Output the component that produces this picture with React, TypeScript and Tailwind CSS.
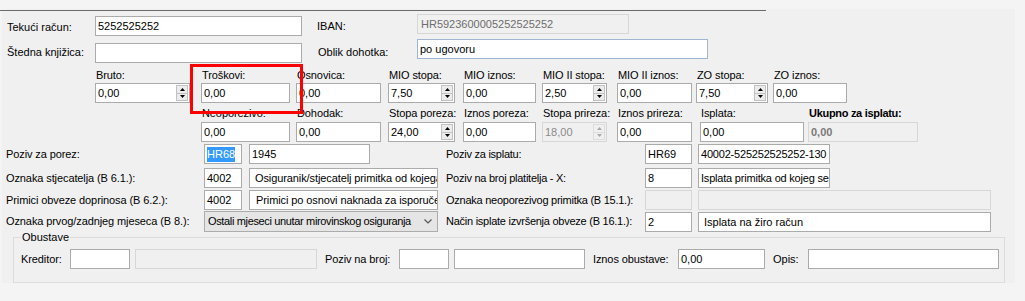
import React from "react";

type BoxProps = {
  w: string;
  children?: React.ReactNode;
  disabled?: boolean;
  className?: string;
  pad?: string;
};

function TBox({ w, children, disabled, className = "", pad = "pl-[2px]" }: BoxProps) {
  return (
    <div
      className={`${w} h-[20px] shrink-0 border flex items-center overflow-hidden whitespace-nowrap leading-[14px] ${pad} ${
        disabled ? "border-[#d7d7d7] bg-[#f0f0f0] text-[#6d6d6d]" : "border-[#ababab] bg-white text-black"
      } ${className}`}
    >
      {children}
    </div>
  );
}

function Arrow({ up, color }: { up?: boolean; color: string }) {
  return (
    <svg width="5" height="3" viewBox="0 0 5 3">
      <path d={up ? "M0 3h5L2.5 0z" : "M0 0h5L2.5 3z"} fill={color} />
    </svg>
  );
}

function Spin({ w, value, disabled }: { w: string; value: string; disabled?: boolean }) {
  const c = disabled ? "#a8a8a8" : "#000000";
  return (
    <div
      className={`${w} h-[20px] shrink-0 border flex overflow-hidden whitespace-nowrap leading-[14px] ${
        disabled ? "border-[#d7d7d7] bg-[#f0f0f0] text-[#8a8a8a]" : "border-[#ababab] bg-white text-black"
      }`}
    >
      <div className="flex-1 flex items-center pl-[2px]">{value}</div>
      <div className="w-[12px] flex flex-col my-[1px] mr-[1px]">
        <div
          className={`flex-1 border flex items-center justify-center ${
            disabled ? "border-[#dcdcdc] bg-[#f0f0f0]" : "border-[#c2c2c2] bg-[#ececec]"
          }`}
        >
          <Arrow up color={c} />
        </div>
        <div
          className={`flex-1 border border-t-0 flex items-center justify-center ${
            disabled ? "border-[#dcdcdc] bg-[#f0f0f0]" : "border-[#c2c2c2] bg-[#ececec]"
          }`}
        >
          <Arrow color={c} />
        </div>
      </div>
    </div>
  );
}

function Cell({
  cw,
  label,
  children,
  bold,
  gap,
}: {
  cw: string;
  label: string;
  children: React.ReactNode;
  bold?: boolean;
  gap: string;
}) {
  return (
    <div className={`${cw} shrink-0 flex flex-col`}>
      <div
        className={`h-[14px] leading-[14px] pl-[1px] whitespace-nowrap ${
          bold ? "font-bold tracking-[-0.3px]" : "tracking-[-0.1px]"
        }`}
      >
        {label}
      </div>
      <div className={gap}>{children}</div>
    </div>
  );
}

export default function App() {
  return (
    <div className="relative w-[1025px] h-[301px] overflow-hidden bg-[#f4f4f4] pt-[9px] pl-[2px] font-['Liberation_Sans',Arial,sans-serif] text-[11px] text-black">
      <div className="w-[1013px] h-[274px] bg-[#f0f0f0] flex flex-col">
        <div className="mt-[1px] -ml-[2px] h-[1px] w-[766px] bg-[#6b6b6b] shrink-0" />

        {/* Row 1 */}
        <div className="mt-[3px] h-[22px] flex items-start shrink-0">
          <div className="ml-[5px] w-[88px] mt-[6px] leading-[14px] whitespace-nowrap">Tekući račun:</div>
          <TBox w="w-[207px]" className="mt-[2px]">5252525252</TBox>
          <div className="ml-[15px] w-[100px] mt-[5px] leading-[14px]">IBAN:</div>
          <TBox w="w-[212px]" disabled pad="pl-[3px]">HR5923600005252525252</TBox>
        </div>

        {/* Row 2 */}
        <div className="mt-[3px] h-[24px] flex items-start shrink-0">
          <div className="ml-[5px] w-[88px] mt-[6px] leading-[14px] whitespace-nowrap">Štedna knjižica:</div>
          <TBox w="w-[207px]" className="mt-[4px]" />
          <div className="ml-[16px] w-[99px] mt-[6px] leading-[14px] whitespace-nowrap">Oblik dohotka:</div>
          <TBox w="w-[291px]" className="!border-[#9fb5d2]">po ugovoru</TBox>
        </div>

        {/* Row 3 */}
        <div className="mt-[5px] flex items-start shrink-0 ml-[93px]">
          <Cell cw="w-[106px]" label="Bruto:" gap="mt-[1px]">
            <Spin w="w-[95px]" value="0,00" />
          </Cell>
          <Cell cw="w-[95px]" label="Troškovi:" gap="mt-[1px]">
            <TBox w="w-[89px]">0,00</TBox>
          </Cell>
          <Cell cw="w-[92px]" label="Osnovica:" gap="mt-[1px]">
            <TBox w="w-[85px]">0,00</TBox>
          </Cell>
          <Cell cw="w-[75px]" label="MIO stopa:" gap="mt-[1px]">
            <Spin w="w-[67px]" value="7,50" />
          </Cell>
          <Cell cw="w-[79px]" label="MIO iznos:" gap="mt-[1px]">
            <TBox w="w-[73px]">0,00</TBox>
          </Cell>
          <Cell cw="w-[75px]" label="MIO II stopa:" gap="mt-[1px]">
            <Spin w="w-[65px]" value="2,50" />
          </Cell>
          <Cell cw="w-[79px]" label="MIO II iznos:" gap="mt-[1px]">
            <TBox w="w-[75px]">0,00</TBox>
          </Cell>
          <Cell cw="w-[77px]" label="ZO stopa:" gap="mt-[1px]">
            <Spin w="w-[72px]" value="7,50" />
          </Cell>
          <Cell cw="w-[74px]" label="ZO iznos:" gap="mt-[1px]">
            <TBox w="w-[74px]">0,00</TBox>
          </Cell>
        </div>

        {/* Row 4 */}
        <div className="mt-[3px] flex items-start shrink-0 ml-[199px]">
          <Cell cw="w-[95px]" label="Neoporezivo:" gap="mt-[2px]">
            <TBox w="w-[89px]">0,00</TBox>
          </Cell>
          <Cell cw="w-[92px]" label="Dohodak:" gap="mt-[2px]">
            <TBox w="w-[85px]">0,00</TBox>
          </Cell>
          <Cell cw="w-[75px]" label="Stopa poreza:" gap="mt-[2px]">
            <Spin w="w-[67px]" value="24,00" />
          </Cell>
          <Cell cw="w-[79px]" label="Iznos poreza:" gap="mt-[2px]">
            <TBox w="w-[73px]">0,00</TBox>
          </Cell>
          <Cell cw="w-[75px]" label="Stopa prireza:" gap="mt-[2px]">
            <Spin w="w-[65px]" value="18,00" disabled />
          </Cell>
          <Cell cw="w-[83px]" label="Iznos prireza:" gap="mt-[2px]">
            <TBox w="w-[75px]">0,00</TBox>
          </Cell>
          <Cell cw="w-[108px]" label="Isplata:" gap="mt-[2px]">
            <TBox w="w-[104px]">0,00</TBox>
          </Cell>
          <Cell cw="w-[110px]" label="Ukupno za isplatu:" bold gap="mt-[2px]">
            <TBox w="w-[110px]" disabled className="font-bold !text-[#7a7a7a]">
              0,00
            </TBox>
          </Cell>
        </div>

        {/* Lower row A */}
        <div className="mt-[2px] h-[20px] flex items-center shrink-0">
          <div className="w-[444px] shrink-0 flex items-center">
            <div className="ml-[4px] w-[198px] whitespace-nowrap tracking-[-0.1px]">Poziv za porez:</div>
            <TBox w="w-[38px]">
              <span className="bg-[#3399ff] text-white leading-[15px]">HR68</span>
            </TBox>
            <TBox w="w-[121px]" className="ml-[7px]">
              1945
            </TBox>
          </div>
          <div className="w-[199px] shrink-0 whitespace-nowrap tracking-[-0.25px]">Poziv za isplatu:</div>
          <TBox w="w-[47px]">HR69</TBox>
          <TBox w="w-[132px]" className="ml-[6px] tracking-[-0.2px]">
            40002-525252525252-130
          </TBox>
        </div>

        {/* Lower row B */}
        <div className="mt-[4px] h-[20px] flex items-center shrink-0">
          <div className="w-[444px] shrink-0 flex items-center">
            <div className="ml-[4px] w-[198px] whitespace-nowrap tracking-[-0.1px]">Oznaka stjecatelja (B 6.1.):</div>
            <TBox w="w-[38px]">4002</TBox>
            <TBox w="w-[189px]" className="ml-[7px] tracking-[-0.1px]" pad="pl-[5px]">
              Osiguranik/stjecatelj primitka od kojega se
            </TBox>
          </div>
          <div className="w-[199px] shrink-0 whitespace-nowrap tracking-[-0.25px]">Poziv na broj platitelja - X:</div>
          <TBox w="w-[47px]">8</TBox>
          <TBox w="w-[132px]" className="ml-[6px] tracking-[-0.2px]">
            Isplata primitka od kojeg se
          </TBox>
        </div>

        {/* Lower row C */}
        <div className="mt-[2px] h-[20px] flex items-center shrink-0">
          <div className="w-[444px] shrink-0 flex items-center">
            <div className="ml-[4px] w-[198px] whitespace-nowrap tracking-[-0.1px]">Primici obveze doprinosa (B 6.2.):</div>
            <TBox w="w-[38px]">4002</TBox>
            <TBox w="w-[189px]" className="ml-[7px] tracking-[-0.1px]" pad="pl-[6px]">
              Primici po osnovi naknada za isporučeni
            </TBox>
          </div>
          <div className="w-[199px] shrink-0 whitespace-nowrap tracking-[-0.25px]">Oznaka neoporezivog primitka (B 15.1.):</div>
          <TBox w="w-[47px]" disabled />
          <TBox w="w-[293px]" className="ml-[6px]" disabled />
        </div>

        {/* Lower row D */}
        <div className="mt-[1px] h-[21px] flex items-center shrink-0">
          <div className="w-[444px] shrink-0 flex items-center">
            <div className="ml-[4px] w-[198px] whitespace-nowrap tracking-[-0.1px]">Oznaka prvog/zadnjeg mjeseca (B 8.):</div>
            <div className="w-[234px] h-[21px] border border-[#acacac] bg-[#e5e5e5] flex items-center pl-[3px] pr-[5px] whitespace-nowrap">
              <span className="flex-1 tracking-[-0.35px]">Ostali mjeseci unutar mirovinskog osiguranja</span>
              <svg width="8" height="5" viewBox="0 0 8 5">
                <path d="M0.5 0.5L4 4L7.5 0.5" stroke="#555555" strokeWidth="1.2" fill="none" />
              </svg>
            </div>
          </div>
          <div className="w-[199px] shrink-0 whitespace-nowrap tracking-[-0.25px]">Način isplate izvršenja obveze (B 16.1.):</div>
          <TBox w="w-[47px]">2</TBox>
          <TBox w="w-[293px]" className="ml-[6px]" pad="pl-[5px]">
            Isplata na žiro račun
          </TBox>
        </div>

        {/* Obustave group */}
        <div className="relative mt-[5px] ml-[11px] w-[992px] h-[46px] border border-[#dcdcdc] shrink-0">
          <span className="absolute left-[7px] top-[-8px] leading-[14px] bg-[#f0f0f0] px-[1px]">Obustave</span>
          <div className="mt-[11px] pl-[7px] h-[20px] flex items-center">
            <div className="w-[49px] shrink-0 tracking-[-0.1px]">Kreditor:</div>
            <TBox w="w-[60px]" />
            <TBox w="w-[182px]" className="ml-[5px]" disabled />
            <div className="ml-[8px] w-[74px] shrink-0 whitespace-nowrap tracking-[-0.1px]">Poziv na broj:</div>
            <TBox w="w-[50px]" />
            <TBox w="w-[131px]" className="ml-[5px]" />
            <div className="ml-[8px] w-[85px] shrink-0 whitespace-nowrap tracking-[-0.1px]">Iznos obustave:</div>
            <TBox w="w-[87px]">0,00</TBox>
            <div className="ml-[8px] w-[35px] shrink-0">Opis:</div>
            <TBox w="w-[191px]" />
          </div>
        </div>
      </div>

      {/* Red highlight rectangle */}
      <div className="absolute left-[190px] top-[64px] w-[113px] h-[50px] border-[3px] border-[#ff0000] pointer-events-none" />
    </div>
  );
}
